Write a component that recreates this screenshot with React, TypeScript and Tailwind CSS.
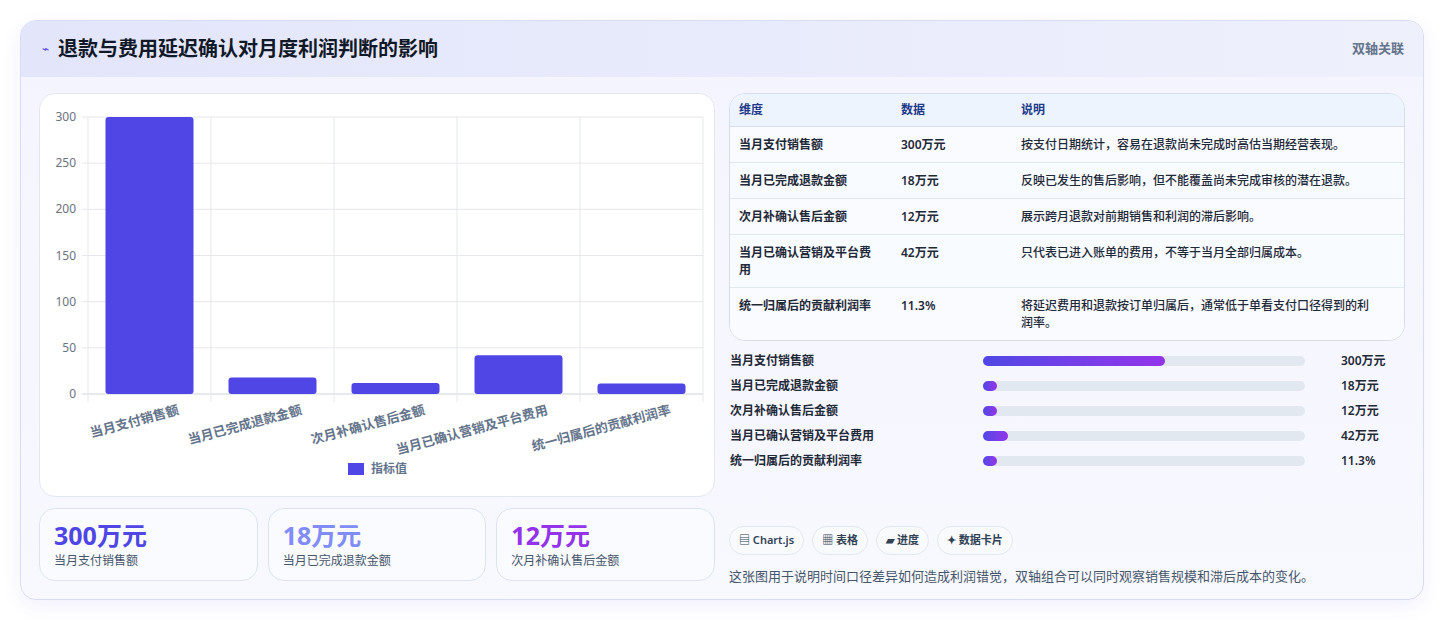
import React from "react";

const font = { fontFamily: '"Noto Sans", "Noto Sans CJK SC", sans-serif' };

const cats = ["当月支付销售额", "当月已完成退款金额", "次月补确认售后金额", "当月已确认营销及平台费用", "统一归属后的贡献利润率"];
const vals = [300, 18, 12, 42, 11.3];

function Chart() {
  const x0 = 48, x1 = 663, yTop = 23, yBot = 300;
  const cw = (x1 - x0) / 5;
  const y = (v: number) => yBot - (v / 300) * (yBot - yTop);
  return (
    <svg width="676" height="404" className="block">
      {[0, 50, 100, 150, 200, 250, 300].map((t) => (
        <g key={t}>
          <line x1={x0 - 6} x2={x1} y1={y(t)} y2={y(t)} stroke={t === 0 ? "#cbd5e1" : "#e5e7eb"} />
          <text x={x0 - 12} y={y(t) + 4} textAnchor="end" fontSize="12" fill="#6b7280">{t}</text>
        </g>
      ))}
      {[0, 1, 2, 3, 4, 5].map((i) => (
        <line key={i} x1={x0 + i * cw} x2={x0 + i * cw} y1={yTop} y2={yBot + 8} stroke="#e5e7eb" />
      ))}
      {vals.map((v, i) => (
        <rect key={i} x={x0 + i * cw + 17.5} width={88} y={y(v)} height={yBot - y(v)} rx="3" fill="#4f46e5" />
      ))}
      {cats.map((c, i) => (
        <text key={c} x={x0 + i * cw + cw / 2 + 30} y={yBot + 20} textAnchor="end" fontSize="13" fontWeight="600" fill="#64748b" transform={`rotate(-15 ${x0 + i * cw + cw / 2 + 30} ${yBot + 20})`}>{c}</text>
      ))}
      <rect x="308" y="369" width="16" height="12" fill="#4f46e5" />
      <text x="331" y="379" fontSize="12" fill="#64748b" fontWeight="600">指标值</text>
    </svg>
  );
}

const rows = [
  ["当月支付销售额", "300万元", "按支付日期统计，容易在退款尚未完成时高估当期经营表现。"],
  ["当月已完成退款金额", "18万元", "反映已发生的售后影响，但不能覆盖尚未完成审核的潜在退款。"],
  ["次月补确认售后金额", "12万元", "展示跨月退款对前期销售和利润的滞后影响。"],
  ["当月已确认营销及平台费用", "42万元", "只代表已进入账单的费用，不等于当月全部归属成本。"],
  ["统一归属后的贡献利润率", "11.3%", "将延迟费用和退款按订单归属后，通常低于单看支付口径得到的利润率。"],
];
const bars = [["当月支付销售额", 56.5, "300万元"], ["当月已完成退款金额", 3.4, "18万元"], ["次月补确认售后金额", 2.3, "12万元"], ["当月已确认营销及平台费用", 7.9, "42万元"], ["统一归属后的贡献利润率", 2.1, "11.3%"]] as const;

export default function App() {
  return (
    <div className="w-[1444px] h-[620px] bg-white pt-5 px-5" style={font}>
      <div className="h-[580px] w-[1404px] rounded-2xl border border-[#d9dcf5] bg-gradient-to-b from-[#f3f4fd] to-[#f8f9ff] shadow-[0_6px_20px_rgba(79,70,229,0.08)] overflow-hidden">
        <div className="h-[56px] bg-gradient-to-r from-[#e3e6fb] to-[#eef0fc] flex items-center justify-between pl-[21px] pr-[19px]">
          <div className="flex items-center gap-[9px]">
            <span className="text-[#4f46e5] text-[12px]">⌁</span>
            <span className="text-[20px] font-bold text-[#111827]">退款与费用延迟确认对月度利润判断的影响</span>
          </div>
          <span className="text-[13px] text-[#64748b] font-semibold">双轴关联</span>
        </div>
        <div className="flex gap-[14px] px-[18px] pt-4">
          <div className="w-[676px] flex flex-col gap-[11px]">
            <div className="h-[404px] bg-white rounded-2xl border border-[#e2e8f0]"><Chart /></div>
            <div className="flex gap-[10px]">
              {[["300万元", "text-[#4f46e5]", "当月支付销售额"], ["18万元", "text-[#818cf8]", "当月已完成退款金额"], ["12万元", "text-[#9333ea]", "次月补确认售后金额"]].map(([v, c, l]) => (
                <div key={l} className="flex-1 h-[73px] rounded-2xl border border-[#dbe4f3] bg-[#f9fbff] px-[14px] pt-[10px]">
                  <div className={`text-[25px] leading-[32px] font-bold ${c}`}>{v}</div>
                  <div className="text-[12px] text-[#475569] mt-[1px]">{l}</div>
                </div>
              ))}
            </div>
          </div>
          <div className="w-[676px] flex flex-col">
            <div className="rounded-2xl border border-[#d6deed] bg-white overflow-hidden text-[12px]">
              <div className="flex h-[33px] items-center bg-[#eef4fe] border-b border-[#d6deed] font-semibold text-[#1e3a8a] px-[9px]">
                <div className="w-[162px]">维度</div><div className="w-[120px]">数据</div><div className="flex-1">说明</div>
              </div>
              {rows.map((r, i) => (
                <div key={i} className={`flex px-[9px] py-[9px] leading-[17px] text-[#1f2937] font-semibold ${i < 4 ? "border-b border-[#e2e8f0]" : ""} ${i % 2 ? "bg-[#f8fbff]" : "bg-[#fafbff]"}`}>
                  <div className="w-[162px] pr-5">{r[0]}</div><div className="w-[120px]">{r[1]}</div><div className="flex-1 pr-4 font-medium">{r[2]}</div>
                </div>
              ))}
            </div>
            <div className="flex flex-col gap-[7px] mt-[11px] text-[12px] font-semibold text-[#1f2937]">
              {bars.map(([l, p, v]) => (
                <div key={l} className="flex items-center h-[18px]">
                  <div className="w-[254px] pl-[1px]">{l}</div>
                  <div className="w-[322px] h-[10px] rounded-full bg-[#e2e8f0]">
                    <div className="h-full rounded-full bg-gradient-to-r from-[#4f46e5] to-[#9333ea] min-w-[14px]" style={{ width: `${p}%` }} />
                  </div>
                  <div className="ml-[36px]">{v}</div>
                </div>
              ))}
            </div>
            <div className="flex gap-2 mt-[56px] text-[11px] font-semibold text-[#334155]">
              {["▤ Chart.js", "▦ 表格", "▰ 进度", "✦ 数据卡片"].map((t) => (
                <span key={t} className="h-[29px] px-[9px] flex items-center rounded-full border border-[#e2e8f0] bg-[#f8fafc]">{t}</span>
              ))}
            </div>
            <div className="mt-[12px] text-[13px] text-[#475569]">这张图用于说明时间口径差异如何造成利润错觉，双轴组合可以同时观察销售规模和滞后成本的变化。</div>
          </div>
        </div>
      </div>
    </div>
  );
}
